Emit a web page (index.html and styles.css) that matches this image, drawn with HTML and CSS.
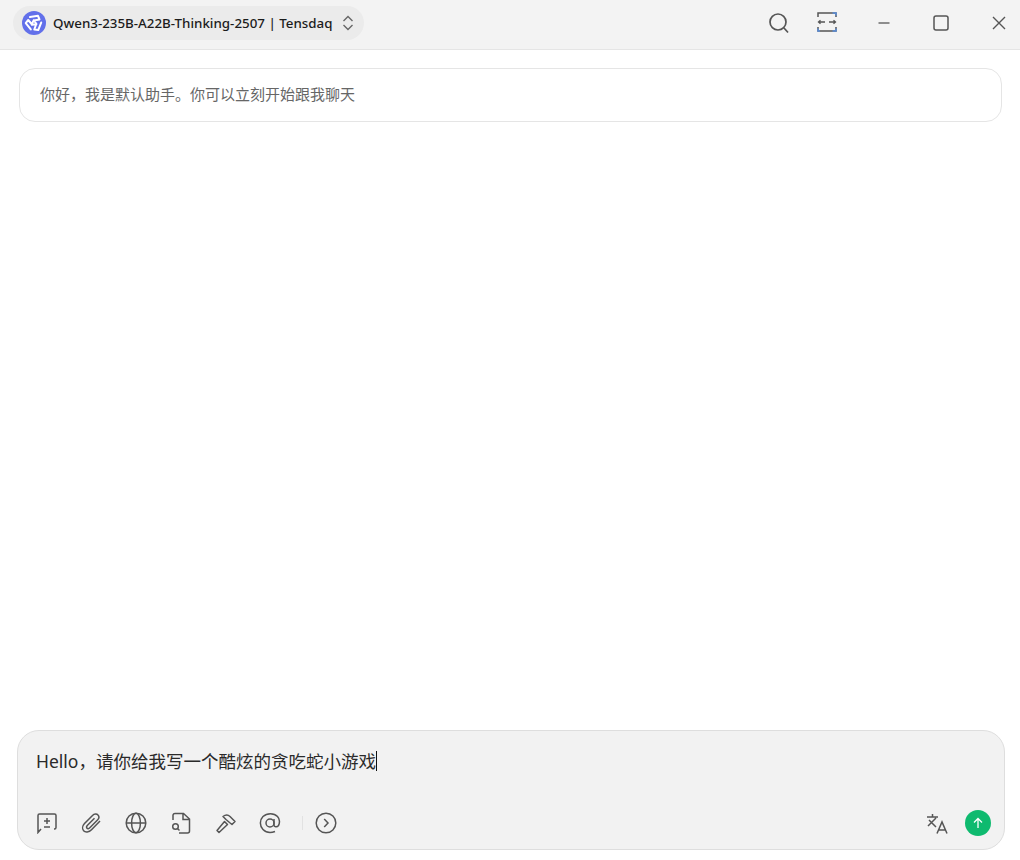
FILE: index.html
```html
<!DOCTYPE html>
<html lang="zh">
<head>
<meta charset="utf-8">
<title>Chat</title>
<link rel="stylesheet" href="styles.css">
</head>
<body>
<div class="app">
  <header class="titlebar">
    <div class="model-pill">
      <svg class="logo" viewBox="0 0 24 24" width="24" height="24">
        <circle cx="12" cy="12" r="12" fill="#6270ea"/>
        <g fill="none" stroke="#fff" stroke-width="2" stroke-linejoin="round" stroke-linecap="round">
          <path d="M8 6 L16 4.8 L17.5 8.5 L12 9.5 L14.5 13"/>
          <path d="M8 6 L16 4.8 L17.5 8.5 L12 9.5 L14.5 13" transform="rotate(120 12 12)"/>
          <path d="M8 6 L16 4.8 L17.5 8.5 L12 9.5 L14.5 13" transform="rotate(240 12 12)"/>
        </g>
      </svg>
      <span class="model-name">Qwen3-235B-A22B-Thinking-2507 | Tensdaq</span>
      <svg class="updown" viewBox="0 0 12 16" width="12" height="16">
        <path d="M1.5 6 L6 1.5 L10.5 6 M1.5 10 L6 14.5 L10.5 10" fill="none" stroke="#666" stroke-width="1.4"/>
      </svg>
    </div>
    <div class="actions">
      <svg class="search" viewBox="0 0 22 22" width="22" height="22">
        <circle cx="10" cy="10" r="8" fill="none" stroke="#555" stroke-width="1.7"/>
        <path d="M16 16 L20 20.5" stroke="#555" stroke-width="1.7"/>
      </svg>
      <svg class="fit" viewBox="0 0 20 20" width="20" height="20">
        <path d="M1 5 V1 H19 V5" fill="none" stroke="#555" stroke-width="1.5"/>
        <path d="M1 15 V19 H19 V15" fill="none" stroke="#555" stroke-width="1.5"/>
        <path d="M15.5 1 H19 V3.5 M15.5 19 H19 V16.5 M1 16.5 V19 H3" fill="none" stroke="#5a8fdc" stroke-width="1.5"/>
        <path d="M1.5 10 H8 M3.5 8.3 L1.5 10 L3.5 11.7 M12 10 H18.5 M16.5 8.3 L18.5 10 L16.5 11.7" fill="none" stroke="#555" stroke-width="1.3"/>
      </svg>
      <svg class="min" viewBox="0 0 14 14" width="14" height="14">
        <path d="M1.5 7 H12.5" stroke="#555" stroke-width="1.3"/>
      </svg>
      <svg class="max" viewBox="0 0 16 16" width="16" height="16">
        <rect x="1" y="1" width="14" height="14" rx="2" fill="none" stroke="#555" stroke-width="1.5"/>
      </svg>
      <svg class="close" viewBox="0 0 14 14" width="14" height="14">
        <path d="M1 1 L13 13 M13 1 L1 13" stroke="#555" stroke-width="1.4"/>
      </svg>
    </div>
  </header>

  <main class="messages">
    <div class="greeting">你好，我是默认助手。你可以立刻开始跟我聊天</div>
  </main>

  <section class="composer">
    <div class="input-text">Hello，请你给我写一个酷炫的贪吃蛇小游戏<span class="caret"></span></div>
    <div class="toolbar">
      <div class="tools">
        <svg viewBox="0 0 22 22" width="22" height="22"><path d="M6 2 H18.5 A1.5 1.5 0 0 1 20 3.5 V15.5 A1.5 1.5 0 0 1 18.5 17 H18 M5 17 L2 20.5 V3.5 A1.5 1.5 0 0 1 3.5 2 H6 M11 6 V12 M8 9 H14 M8 15 H14" fill="none" stroke="#555" stroke-width="1.5"/></svg>
        <svg viewBox="0 0 22 22" width="22" height="22"><path d="M19 9 L10.5 17.8 C8 20.5 4.2 20.6 2.6 18.8 C1 17 1.4 13.8 3.5 11.6 L11.5 3.5 C13.2 1.7 15.8 1.6 17 3 C18.3 4.4 18 6.5 16.5 8 L8.8 15.8 C7.8 16.8 6.6 16.9 6 16.2 C5.3 15.4 5.6 14.2 6.5 13.3 L13.5 6.2" fill="none" stroke="#555" stroke-width="1.5"/></svg>
        <svg viewBox="0 0 22 22" width="22" height="22"><circle cx="11" cy="11" r="9.8" fill="none" stroke="#555" stroke-width="1.5"/><ellipse cx="11" cy="11" rx="4.4" ry="9.8" fill="none" stroke="#555" stroke-width="1.5"/><path d="M1.2 11 H20.8" stroke="#555" stroke-width="1.5"/></svg>
        <svg viewBox="0 0 22 22" width="22" height="22"><path d="M3 8 V3 A2 2 0 0 1 5 1.5 H13.5 L19.5 7 V19 A2 2 0 0 1 17.5 21 H9 M13 2 V7.5 H19" fill="none" stroke="#555" stroke-width="1.5"/><circle cx="5.5" cy="14.5" r="2.8" fill="none" stroke="#555" stroke-width="1.5"/><path d="M7.5 16.5 L9.5 18.5" stroke="#555" stroke-width="1.5"/></svg>
        <svg viewBox="0 0 22 22" width="22" height="22"><path d="M2 18.5 L9.5 9.5 L12.5 12.5 L4 20.5 Z M8 4.5 C10.5 2.5 13 2.5 15 4.5 L20 9.5 L17 12.5 L14.5 10.5 L11 7.5 Z" fill="none" stroke="#555" stroke-width="1.5" stroke-linejoin="round"/></svg>
        <svg viewBox="0 0 22 22" width="22" height="22"><circle cx="11" cy="11" r="4" fill="none" stroke="#555" stroke-width="1.5"/><path d="M15 7 V13 C15 15 18 15.5 19.5 13.5 C21 11 20.8 7 18.5 4.5 C15 0.8 8 0.8 4 4.5 C0.5 8 0.5 14 4 17.5 C7 20.5 12 21 16 19.5" fill="none" stroke="#555" stroke-width="1.5"/></svg>
        <span class="tool-sep"></span>
        <svg viewBox="0 0 22 22" width="22" height="22"><circle cx="11" cy="11" r="9.8" fill="none" stroke="#555" stroke-width="1.5"/><path d="M9.2 7 L13 11 L9.2 15" fill="none" stroke="#555" stroke-width="1.5"/></svg>
      </div>
      <div class="send-group">
        <svg viewBox="0 0 22 22" width="22" height="22"><path d="M1 5 H12 M6.5 2 V5 M3 8 L10 15 M10 6 L2 14" fill="none" stroke="#555" stroke-width="1.5"/><path d="M11 21.5 L16 10 L21 21.5 M12.5 18 H19.5" fill="none" stroke="#555" stroke-width="1.5"/></svg>
        <span class="send">
          <svg viewBox="0 0 12 12" width="12" height="12"><path d="M6 11 V1.5 M2 5.5 L6 1.5 L10 5.5" fill="none" stroke="#fff" stroke-width="1.3"/></svg>
        </span>
      </div>
    </div>
  </section>
</div>
</body>
</html>
```

FILE: styles.css
```css
* { box-sizing: border-box; }

html, body {
  margin: 0;
  height: 100%;
  background: #fff;
}

body {
  font-family: "Noto Sans", "Noto Sans CJK SC", sans-serif;
  color: #222;
}

.app {
  height: 860px;
  display: flex;
  flex-direction: column;
  overflow: hidden;
}

.titlebar {
  height: 50px;
  flex: none;
  display: flex;
  align-items: flex-start;
  justify-content: space-between;
  padding: 6px 13px 0;
  background: #f3f3f3;
  border-bottom: 1px solid #e5e5e5;
}

.model-pill {
  width: 351px;
  height: 34px;
  display: flex;
  align-items: center;
  padding: 0 10px 0 9px;
  background: #ebebeb;
  border-radius: 17px;
}

.logo { flex: none; }

.model-name {
  margin-left: 7px;
  flex: 1;
  font-size: 13.35px;
  font-weight: 500;
  color: #1c1c1c;
  white-space: nowrap;
}

.updown { flex: none; }

.actions {
  display: flex;
  align-items: center;
  height: 34px;
  color: #555;
}

.search { margin-right: 27px; }
.fit { margin-right: 40px; margin-top: -3px; }
.min { margin-right: 42px; }
.max { margin-right: 43px; }
.close { margin-right: 1px; }

.messages {
  flex: 1;
  padding: 18px 18px 0 19px;
  min-height: 0;
}

.greeting {
  height: 54px;
  display: flex;
  align-items: center;
  padding: 0 20px 3px;
  background: #fff;
  border: 1px solid #e5e5e5;
  border-radius: 16px;
  font-size: 15px;
  color: #666;
}

.composer {
  flex: none;
  height: 120px;
  margin: 0 15px 10px 17px;
  padding: 19px 13px 13px 18px;
  display: flex;
  flex-direction: column;
  justify-content: space-between;
  background: #f2f2f2;
  border: 1px solid #dedede;
  border-radius: 22px;
}

.input-text {
  font-size: 17.5px;
  line-height: 22px;
  color: #2a2a2a;
  display: flex;
  align-items: center;
}

.caret {
  width: 1px;
  height: 20px;
  background: #111;
}

.toolbar {
  display: flex;
  align-items: center;
  justify-content: space-between;
}

.tools {
  display: flex;
  align-items: center;
  gap: 22.7px;
}

.tool-sep {
  width: 1px;
  height: 14px;
  margin: 0 -11px 0 -2px;
  background: #e2e2e2;
}

.send-group {
  display: flex;
  align-items: center;
  gap: 17px;
}

.send {
  width: 26px;
  height: 26px;
  display: flex;
  align-items: center;
  justify-content: center;
  border-radius: 50%;
  background: #0fba6f;
}
```
